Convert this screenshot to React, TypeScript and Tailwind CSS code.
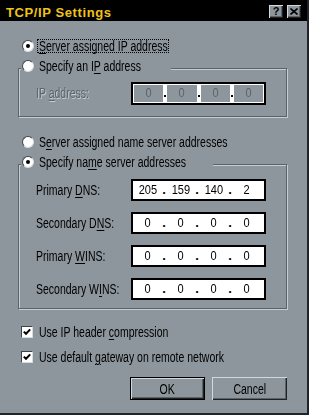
import { Fragment } from "react";

const FACE = "bg-[#8d969d]";

// the dialog font is a narrow sans; no narrow face is installed, so squeeze Liberation Sans
function T({ children, center }: { children: React.ReactNode; center?: boolean }) {
  return (
    <span
      className={
        "inline-block whitespace-nowrap scale-x-[0.75] " + (center ? "origin-center" : "origin-left")
      }
    >
      {children}
    </span>
  );
}

function U({ children }: { children: string }) {
  return <span className="underline decoration-1 underline-offset-[2px]">{children}</span>;
}

function Radio({ checked }: { checked?: boolean }) {
  return (
    <span className="w-[12px] h-[12px] shrink-0 rounded-full bg-white border border-t-[#3e454a] border-l-[#3e454a] border-r-[#d6dde0] border-b-[#d6dde0] flex items-center justify-center">
      {checked && <span className="w-[4px] h-[4px] rounded-full bg-black" />}
    </span>
  );
}

function RadioRow({ checked, focused, children }: { checked?: boolean; focused?: boolean; children: React.ReactNode }) {
  return (
    <div className="h-[14px] flex items-center pl-[1px]">
      <Radio checked={checked} />
      <span
        className={
          "ml-[3px] px-[1px] leading-[12px] border border-dotted whitespace-nowrap " +
          (focused ? "border-black w-[132px]" : "border-transparent")
        }
      >
        <T>{children}</T>
      </span>
    </div>
  );
}

function Check({ children }: { children: React.ReactNode }) {
  return (
    <div className="h-[14px] flex items-center">
      <span className="w-[12px] h-[12px] shrink-0 bg-white border border-t-[#3e454a] border-l-[#3e454a] border-r-[#d6dde0] border-b-[#d6dde0] flex items-center justify-center">
        <svg width="8" height="8" viewBox="0 0 8 8">
          <polyline points="0.8,3.6 3,5.8 7.2,1.4" fill="none" stroke="#000" strokeWidth="2" />
        </svg>
      </span>
      <span className="ml-[6px] leading-[12px]">
        <T>{children}</T>
      </span>
    </div>
  );
}

function Digits({ v }: { v: string }) {
  return <span className="inline-block whitespace-nowrap scale-x-[0.85] origin-center">{v}</span>;
}

function IpBox({ values }: { values: string[] }) {
  return (
    <div className="w-[135px] h-[22px] border-2 border-black bg-white flex items-center pl-[2px] pb-[1px] text-[13px]">
      {values.map((v, i) => (
        <Fragment key={i}>
          {i > 0 && <span className="w-[8px] text-center font-bold">.</span>}
          <span className="w-[25px] text-center">
            <Digits v={v} />
          </span>
        </Fragment>
      ))}
    </div>
  );
}

function IpBoxDisabled() {
  return (
    <div className="w-[135px] h-[23px] border-2 border-black bg-white p-[1px] flex text-[13px]">
      {[0, 1, 2, 3].map((i) => (
        <Fragment key={i}>
          {i > 0 && (
            <span className="w-[4px] flex items-end pb-[5px] pl-[1px]">
              <span className="w-[2px] h-[2px] bg-black" />
            </span>
          )}
          <span className={"flex-1 text-center leading-[15px] text-[#5c646a] " + FACE}>
            <Digits v="0" />
          </span>
        </Fragment>
      ))}
    </div>
  );
}

function FieldRow({ label, values }: { label: React.ReactNode; values: string[] }) {
  return (
    <div className="flex items-center">
      <span className="w-[95px]">
        <T>{label}</T>
      </span>
      <IpBox values={values} />
    </div>
  );
}

function TitleButton({ children }: { children: React.ReactNode }) {
  return (
    <span
      className={
        "w-[14px] h-[13px] flex items-center justify-center shadow-[inset_1px_1px_0_#d2d9dc,inset_-1px_-1px_0_#1f2326,inset_-2px_-2px_0_#5b6369] " +
        FACE
      }
    >
      {children}
    </span>
  );
}

const bevel = "shadow-[inset_1px_1px_0_#d2d9dc,inset_-1px_-1px_0_#1f2326,inset_-2px_-2px_0_#5b6369]";

const groupBox =
  "border border-[#5b6369] shadow-[inset_1px_1px_0_#c7ced2,1px_1px_0_#c7ced2] pl-[2px]";

export default function App() {
  return (
    <div
      className={
        "w-[309px] h-[415px] flex flex-col border-r-2 border-b-2 border-[#202428] text-black text-[14px] font-['Liberation_Sans',Arial,sans-serif] " +
        FACE
      }
    >
      {/* title bar */}
      <div className="h-[21px] bg-black flex items-center pl-[6px] pr-[6px]">
        <span className="pt-[4px] font-bold text-[13px] tracking-[0.6px] text-[#f2c318] leading-none">
          TCP/IP Settings
        </span>
        <div className="ml-auto flex gap-[4px] mt-[1px]">
          <TitleButton>
            <span className="font-bold text-[11px] leading-none">?</span>
          </TitleButton>
          <TitleButton>
            <svg width="8" height="7" viewBox="0 0 8 7">
              <path d="M0.5 0.5 L7.5 6.5 M7.5 0.5 L0.5 6.5" stroke="#000" strokeWidth="1.6" />
            </svg>
          </TitleButton>
        </div>
      </div>

      <div className="pl-[18px] pr-[20px] pt-[18px] flex flex-col">
        <div className="ml-[3px]">
          <RadioRow checked focused>
            <U>S</U>erver assigned IP address
          </RadioRow>
        </div>

        <fieldset className={"mt-[6px] pb-[11px] " + groupBox}>
          <legend className={"w-[150px] h-[18px] flex items-start " + FACE}>
            <RadioRow>
              Specify an I<U>P</U> address
            </RadioRow>
          </legend>
          <div className="pl-[15px] pt-[5px] flex items-center">
            <span className="w-[95px] text-[#5c646a] [text-shadow:1px_1px_0_#c7ced2]">
              <T>
                IP <U>a</U>ddress:
              </T>
            </span>
            <IpBoxDisabled />
          </div>
        </fieldset>

        <div className="ml-[3px] mt-[18px]">
          <RadioRow>
            S<U>e</U>rver assigned name server addresses
          </RadioRow>
        </div>

        <fieldset className={"mt-[6px] pb-[8px] " + groupBox}>
          <legend className={"w-[192px] h-[18px] flex items-start " + FACE}>
            <RadioRow checked>
              Specify na<U>m</U>e server addresses
            </RadioRow>
          </legend>
          <div className="pl-[15px] pt-[6px] flex flex-col gap-[11px]">
            <FieldRow label={<>Primary <U>D</U>NS:</>} values={["205", "159", "140", "2"]} />
            <FieldRow label={<>Secondary D<U>N</U>S:</>} values={["0", "0", "0", "0"]} />
            <FieldRow label={<>Primary <U>W</U>INS:</>} values={["0", "0", "0", "0"]} />
            <FieldRow label={<>Secondary W<U>I</U>NS:</>} values={["0", "0", "0", "0"]} />
          </div>
        </fieldset>

        <div className="ml-[3px] mt-[16px] flex flex-col gap-[11px]">
          <Check>
            Use IP header <U>c</U>ompression
          </Check>
          <Check>
            Use default <U>g</U>ateway on remote network
          </Check>
        </div>

        <div className="mt-[13px] flex justify-end gap-[7px]">
          <button className={"w-[75px] h-[23px] border border-black leading-none " + bevel}>
            <T center>OK</T>
          </button>
          <button className={"w-[75px] h-[23px] leading-none " + bevel}>
            <T center>Cancel</T>
          </button>
        </div>
      </div>
    </div>
  );
}
